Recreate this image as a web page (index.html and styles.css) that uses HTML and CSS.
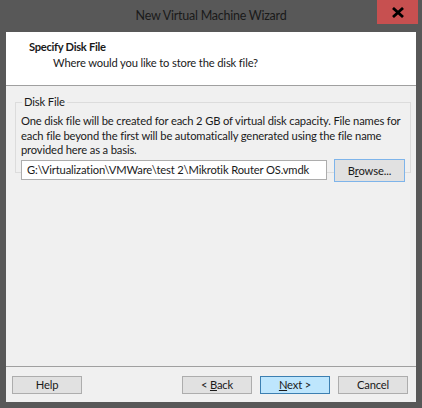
FILE: index.html
```html
<!DOCTYPE html>
<html>
<head>
<meta charset="utf-8">
<link rel="stylesheet" href="styles.css">
</head>
<body>
<div class="window">
  <div class="titlebar">
    <span class="title">New Virtual Machine Wizard</span>
    <div class="close">
      <svg width="16" height="11" viewBox="0 0 16 11"><path d="M3 1 L13 10 M13 1 L3 10" stroke="#000" stroke-width="2.8" fill="none"/></svg>
    </div>
  </div>
  <div class="client">
    <div class="header">
      <div class="h-title">Specify Disk File</div>
      <div class="h-sub">Where would you like to store the disk file?</div>
    </div>
    <div class="body">
      <fieldset class="group">
        <legend>Disk File</legend>
        <p class="desc">One disk file will be created for each 2 GB of virtual disk capacity. File names for each file beyond the first will be automatically generated using the file name provided here as a basis.</p>
        <div class="row">
          <div class="textbox">G:\Virtualization\VMWare\test 2\Mikrotik Router OS.vmdk</div>
          <div class="btn browse">B<u>r</u>owse...</div>
        </div>
      </fieldset>
    </div>
    <div class="footer">
      <div class="btn">Help</div>
      <div class="spacer"></div>
      <div class="btn">&lt; <u>B</u>ack</div>
      <div class="btn next"><u>N</u>ext &gt;</div>
      <div class="btn">Cancel</div>
    </div>
  </div>
</div>
</body>
</html>
```
FILE: styles.css
```css
* { box-sizing: border-box; }
html, body { margin: 0; padding: 0; }
body {
  background: #585858;
  font-family: Lato, "Noto Sans", sans-serif;
  font-size: 11.2px;
  letter-spacing: -0.15px;
  color: #1a1a1a;
}
.window {
  width: 422px;
  height: 408px;
  background: #585858;
  display: flex;
  flex-direction: column;
  padding: 0 6px 6px 6px;
  position: relative;
}
.titlebar {
  height: 32px;
  display: flex;
  align-items: center;
  justify-content: center;
  padding-bottom: 2px;
}
.title {
  font-size: 12.5px;
  letter-spacing: -0.25px;
  color: #1a1a1a;
}
.close {
  position: absolute;
  top: 0;
  right: 4px;
  width: 41px;
  height: 24px;
  background: #c75050;
  display: flex;
  align-items: center;
  justify-content: center;
}
.client {
  flex: 1;
  background: #f0f0f0;
  display: flex;
  flex-direction: column;
}
.header {
  height: 54px;
  background: #fff;
  border-bottom: 1px solid #a0a0a0;
  padding: 7px 0 0 23px;
}
.h-title {
  font-weight: bold;
  letter-spacing: -0.3px;
  line-height: 16px;
}
.h-sub {
  padding-left: 24px;
  line-height: 15px;
}
.body {
  flex: 1;
  padding: 9px 6px 0 9px;
}
.group {
  margin: 0;
  border: 1px solid #dcdcdc;
  padding: 5px 5px 5px 5px;
  height: 78px;
}
.group legend {
  padding: 0 2px;
  margin-left: 1px;
  line-height: 14px;
}
.desc {
  margin: 0;
  line-height: 14.5px;
}
.row {
  display: flex;
  align-items: center;
  gap: 7px;
  margin-top: 1px;
}
.textbox {
  width: 306px;
  height: 20px;
  background: #fff;
  border: 1px solid #adadad;
  padding: 0 5px;
  line-height: 18px;
  white-space: nowrap;
  overflow: hidden;
}
.btn {
  width: 70px;
  height: 18px;
  background: #e1e1e1;
  border: 1px solid #adadad;
  text-align: center;
  line-height: 16px;
}
.btn.browse {
  width: 71px;
  height: 23px;
  line-height: 21px;
  border: 1px dotted #3c7fb1;
  outline: 1px solid #7eb4ea;
  outline-offset: -1px;
}
.btn.next {
  background: #bee6fd;
  border-color: #3c7fb1;
}
.footer {
  border-top: 1px solid #a0a0a0;
  height: 36px;
  display: flex;
  align-items: flex-start;
  padding: 9px 8px 0 6px;
  gap: 8px;
}
.spacer { flex: 1; }
u { text-decoration: underline; }
```
